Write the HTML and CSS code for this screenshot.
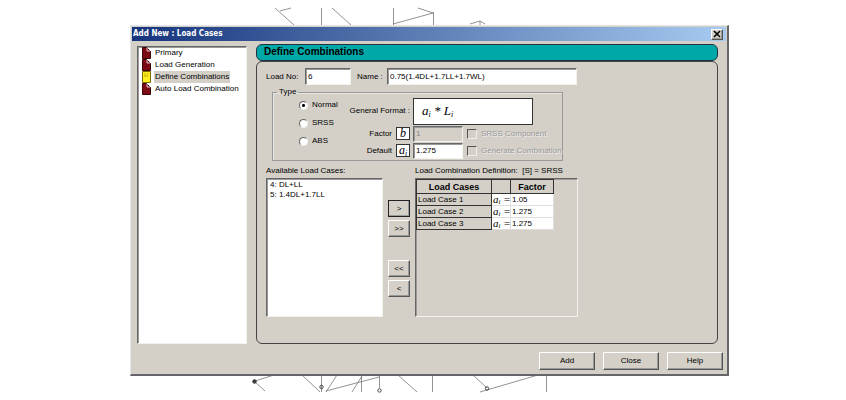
FILE: index.html
```
<!DOCTYPE html>
<html lang="en">
<head>
<meta charset="utf-8">
<title>Add New : Load Cases</title>
<link rel="stylesheet" href="styles.css">
</head>
<body>
<svg class="scene" viewBox="0 0 846 400" preserveAspectRatio="xMinYMin meet" fill="none" stroke="#777" stroke-width=".8" aria-hidden="true">
<path d="M275 8l19 17M280 11l11-3M321.500 8v17M332 8l19 17M393.500 8v17M393 24l40-11M433.500 12v13M418 8l15 5M470 24l10-3v4M480 21l5 3"/>
<path d="M255 381l19-6M255 382l10 9M302 375l18 17M321.500 375v17M337 375l-11 17M326 391l53-14M379.500 376v12M352 392l10-16M361.500 375v17M398 375l19 17M432.500 375v17M473 375l14 13M480 392l58-17M546.500 375v17"/>
<g stroke="#222"><circle cx="254.500" cy="381.500" r="1.800" fill="#444"/><circle cx="321.500" cy="387" r="1.700"/><circle cx="379.500" cy="390.500" r="1.700"/><circle cx="487" cy="388.500" r="1.700"/></g>
</svg>
<main class="desktop">
<section class="dialog">
  <header class="titlebar">
    <h1>Add New : Load Cases</h1>
    <button class="close" type="button" aria-label="Close window"><svg viewBox="0 0 8 8" width="8" height="8"><path d="M1 1l6 6M7 1l-6 6" stroke="#000" stroke-width="1.600"/></svg></button>
  </header>
  <div class="body">
    <nav class="tree sunken">
      <a href="#primary"><svg class="doc" viewBox="0 0 9 12"><path d="M.5.5h4l4 4v7h-8z" fill="#7b0a14" stroke="#3c0508"/><path d="M5 1v3h3" fill="none" stroke="#e8c8c8"/></svg><span>Primary</span></a>
      <a href="#generation"><svg class="doc" viewBox="0 0 9 12"><path d="M.5.5h4l4 4v7h-8z" fill="#7b0a14" stroke="#3c0508"/><path d="M5 1v3h3" fill="none" stroke="#e8c8c8"/></svg><span>Load Generation</span></a>
      <a href="#define" class="current"><svg class="doc" viewBox="0 0 9 12"><path d="M.5.5h8v11h-8z" fill="#ffee20" stroke="#776b00"/><path d="M2 3h1.500M5 3h1.500M2 5h4" stroke="#a08f00" stroke-width=".8"/></svg><span>Define Combinations</span></a>
      <a href="#auto"><svg class="doc" viewBox="0 0 9 12"><path d="M.5.5h4l4 4v7h-8z" fill="#7b0a14" stroke="#3c0508"/><path d="M5 1v3h3" fill="none" stroke="#e8c8c8"/></svg><span>Auto Load Combination</span></a>
    </nav>
    <form class="pane">
      <h2>Define Combinations</h2>
      <div class="panel">
        <div class="row">
          <label for="no" class="nolabel">Load No:</label><input id="no" class="sunken no" value="6">
          <label for="name" class="namelabel">Name :</label><input id="name" class="sunken name" value="0.75(1.4DL+1.7LL+1.7WL)">
        </div>
        <fieldset>
          <legend>Type</legend>
          <div class="radios">
            <label><input type="radio" name="type" checked>Normal</label>
            <label><input type="radio" name="type">SRSS</label>
            <label><input type="radio" name="type">ABS</label>
          </div>
          <div class="format">
            <span class="flabel">General Format :</span><output class="formula">a<sub>i</sub> * L<sub>i</sub></output>
            <label for="factor" class="flabel">Factor <i class="sym">b</i></label>
            <div class="row"><input id="factor" class="sunken val" value="1" disabled><label class="off"><input type="checkbox" disabled>SRSS Component</label></div>
            <label for="default" class="flabel">Default <i class="sym">a<sub>i</sub></i></label>
            <div class="row"><input id="default" class="sunken val" value="1.275"><label class="off"><input type="checkbox" disabled>Generate Combination</label></div>
          </div>
        </fieldset>
        <div class="lists">
          <div class="available">
            <div class="caption" id="avail">Available Load Cases:</div>
            <ul class="sunken" aria-labelledby="avail"><li>4: DL+LL</li><li>5: 1.4DL+1.7LL</li></ul>
          </div>
          <div class="movers">
            <button type="button" class="primary">&gt;</button><button type="button">&gt;&gt;</button>
            <button type="button" class="apart">&lt;&lt;</button><button type="button">&lt;</button>
          </div>
          <div class="definition">
            <div class="caption">Load Combination Definition:&nbsp; [S] = SRSS</div>
            <div class="sunken grid">
              <table>
                <thead><tr><th class="c1">Load Cases</th><th class="c2"></th><th class="c3">Factor</th></tr></thead>
                <tbody>
                <tr><th>Load Case 1</th><td class="eq">a<sub>i</sub> =</td><td>1.05</td></tr>
                <tr><th>Load Case 2</th><td class="eq">a<sub>i</sub> =</td><td>1.275</td></tr>
                <tr><th>Load Case 3</th><td class="eq">a<sub>i</sub> =</td><td>1.275</td></tr>
                </tbody>
              </table>
            </div>
          </div>
        </div>
      </div>
    </form>
  </div>
  <footer><button type="button">Add</button><button type="button">Close</button><button type="button">Help</button></footer>
</section>
</main>
</body>
</html>
```
FILE: styles.css
```
* { box-sizing: border-box; }
body { margin: 0; background: #fff; color: #000; font: 8px/12px "Liberation Sans", Arial, sans-serif; }
.scene { position: absolute; left: 0; top: 0; width: 100%; }
.desktop { position: relative; display: grid; grid-template-columns: 130fr 599fr 117fr; padding-top: 25px; }
.dialog { grid-column: 2; min-width: 0; background: #d4d0c8; border: 1px solid #e4e6e8; border-right: 2px solid #66666a; border-bottom: 2px solid #66666a; }
h1, h2, ul { margin: 0; padding: 0; }
input, button { font: inherit; color: inherit; }
button { padding: 0; background: #d4d0c8; border: 1px solid; border-color: #fff #555 #555 #fff; box-shadow: inset -1px -1px #999; }
.titlebar { display: flex; align-items: center; justify-content: space-between; height: 14px; margin: 1px; padding: 0 3px 0 1px; background: linear-gradient(90deg, #16347c, #a6caf0); }
h1 { color: #fff; font: bold 8px/12px "DejaVu Sans Condensed", "DejaVu Sans", sans-serif; }
.close { display: flex; align-items: center; justify-content: center; width: 12px; height: 11px; }
.body { display: grid; grid-template-columns: 110px minmax(0, 1fr); gap: 9px; padding: 2px 9px 0 6px; }
.sunken { background: #fff; border: 1px solid; border-color: #666 #f4f2ec #f4f2ec #666; box-shadow: inset 1px 1px #999; }
.tree { margin-top: 2px; padding: 0 4px; }
.tree a { display: flex; align-items: center; gap: 3px; height: 12px; color: inherit; text-decoration: none; }
.tree span { padding: 0 1px; white-space: nowrap; }
.current span { background: #d4d0c8; }
.doc { flex: none; width: 9px; height: 12px; }
h2 { height: 17px; padding-left: 7px; border: 1px solid #234; border-radius: 6px; background: #00a8a8; font: bold 10px/14px "Liberation Sans", sans-serif; }
.panel { height: 283px; padding: 6px 9px; border: 1px solid #444; border-radius: 6px; }
.row { display: flex; align-items: center; }
.sunken.no, .sunken.name, .val { height: 17px; padding: 0 2px; border-radius: 0; }
.nolabel { width: 39px; }
.no { width: 46px; }
.namelabel { width: 36px; padding-left: 6px; white-space: nowrap; }
.name { width: 190px; }
fieldset { display: flex; width: 290px; height: 74px; margin: 2px 0 0 6px; padding: 0 0 0 26px; border: 1px solid #999; box-shadow: inset 1px 1px #e8e6e0; }
legend { margin-left: -22px; padding: 0 2px; line-height: 10px; }
.radios { display: flex; flex-direction: column; gap: 6px; width: 42px; padding-top: 2px; }
.radios label, .off { display: flex; align-items: center; gap: 4px; white-space: nowrap; }
input[type="radio"] { appearance: none; width: 9px; height: 9px; margin: 0; border: 1px solid; border-color: #666 #eee #eee #666; border-radius: 50%; background: #fff; }
input[type="radio"]:checked { background: radial-gradient(circle, #000 0 1px, #fff 2px); }
input[type="checkbox"] { appearance: none; width: 10px; height: 10px; margin: 0; border: 1px solid; border-color: #555 #eee #eee #555; background: #d4d0c8; }
.format { display: grid; grid-template-columns: 72px 1fr; grid-template-rows: 28px 17px 17px; align-items: center; }
.flabel { display: flex; align-items: center; justify-content: flex-end; gap: 4px; padding-right: 3px; white-space: nowrap; }
.formula { width: 120px; height: 27px; padding: 4px 8px; border: 1px solid #333; background: #fff; font: italic 13px/16px "Liberation Serif", serif; }
sub { font-size: 8px; line-height: 0; vertical-align: -2px; }
.sym { width: 14px; height: 13px; border: 1px solid #333; background: #fff; font: italic 12px/10px "Liberation Serif", serif; text-align: center; }
.val { width: 50px; height: 16px; }
.val:disabled { background: #d4d0c8; color: #888; }
.off { padding-left: 4px; color: #999; text-shadow: 1px 1px #eee; }
.lists { display: grid; grid-template-columns: 117px 22px 163px; column-gap: 5px; margin-top: 4px; }
.caption { height: 13px; white-space: nowrap; }
ul { height: 139px; padding-top: 1px; list-style: none; }
li { padding-left: 3px; line-height: 10px; }
.movers { padding-top: 35px; }
.movers button { display: block; width: 22px; height: 17px; margin-bottom: 3px; }
.movers .primary { border-color: #222; }
.movers .apart { margin-top: 23px; }
.grid { height: 139px; background: #d4d0c8; }
table { border-collapse: collapse; table-layout: fixed; width: 138px; }
th, td { height: 12px; padding: 0 1px; border: 1px solid #333; text-align: left; font-weight: normal; line-height: 11px; }
thead th { height: 14px; font: bold 9px/12px "Liberation Sans", sans-serif; text-align: center; }
td { background: #fff; border-color: #ddd; white-space: nowrap; }
.c1 { width: 75px; }
.c2 { width: 19px; }
.eq { font: italic 11px/11px "Liberation Serif", serif; }
.eq sub { font-size: 7px; vertical-align: -1px; }
footer { display: flex; justify-content: flex-end; gap: 8px; padding: 8px 4px 4px; }
footer button { width: 56px; height: 18px; }
```
